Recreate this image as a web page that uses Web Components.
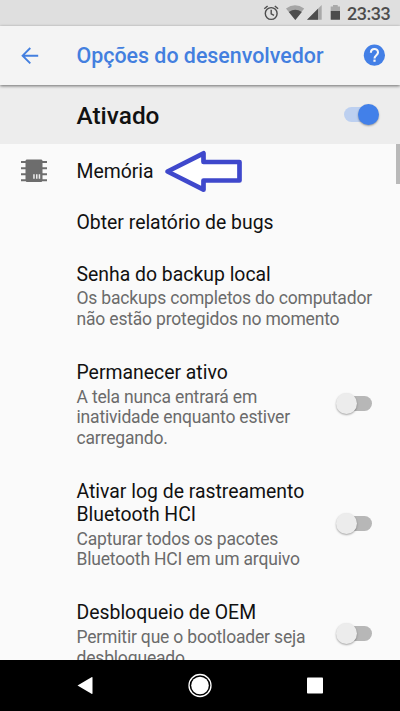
<!DOCTYPE html>
<html lang="pt-BR">
<head>
<meta charset="utf-8">
<title>Opções do desenvolvedor</title>
<style>
html, body { margin: 0; height: 100%; overflow: hidden; }
body { font-family: Roboto, "Liberation Sans", sans-serif; background: #fafafa; color: #111; }
</style>
</head>
<body>
<settings-screen></settings-screen>
<script>
function define(name, html) {
  const template = document.createElement('template');
  template.innerHTML = html;
  customElements.define(name, class extends HTMLElement {
    constructor() {
      super();
      this.attachShadow({ mode: 'open' }).append(template.content.cloneNode(true));
    }
  });
}

define('status-bar', `
<style>
:host { display: flex; height: 26px; background: #dfdfdf; color: #4d4d4d; flex: none; justify-content: flex-end; align-items: center; padding-right: 10px; box-sizing: border-box; }
span { font-size: 18px; font-weight: 500; line-height: 26px; letter-spacing: -.5px; width: 43px; white-space: nowrap; padding-top: 1px; }
svg { display: block; flex: none; }
</style>
<svg width="84" height="26" viewBox="263 0 84 26">
  <g fill="none" stroke="#4d4d4d" stroke-width="1.4">
    <circle cx="271.2" cy="13.5" r="5.9"/>
    <path d="M271.2 9.8V13.8L274 15.4"/>
    <path d="M264.3 8.7L267.6 6M278.1 8.7L274.8 6"/>
  </g>
  <path d="M286 8.6Q295 1.8 304.2 8.6L295.3 20Z" fill="#a5a5a5"/>
  <path d="M288.8 12Q295.3 7.3 301.8 12L295.3 20Z" fill="#4d4d4d"/>
  <path d="M321.7 5V19.7H307Z" fill="#a9a9a9"/>
  <path d="M318 8.7V19.7H307Z" fill="#4d4d4d"/>
  <path d="M330.7 6.5H333V5H337.7V6.5H340V11H330.7Z" fill="#a9a9a9"/>
  <path d="M330.7 11H340V19.2Q340 19.8 339.4 19.8H331.3Q330.7 19.8 330.7 19.2Z" fill="#4d4d4d"/>
</svg><span>23:33</span>`);

define('app-bar', `
<style>
:host { display: flex; height: 59px; flex: none; align-items: center; background: #f4f4f4; color: #437fdf; box-shadow: 0 1px 3px rgba(0,0,0,.55); z-index: 1; padding: 0 14px 0 20px; box-sizing: border-box; }
h1 { margin: 1px 0 0 36.5px; flex: 1; font-size: 21.4px; font-weight: 500; line-height: 28px; white-space: nowrap; }
svg { display: block; flex: none; }
</style>
<svg width="20" height="20" viewBox="0 0 20 20" fill="none" stroke="#437fdf" stroke-width="1.9"><path d="M18.2 9.7H2.8M10.3 2L2.6 9.7L10.3 17.4"/></svg>
<h1><slot></slot></h1>
<svg width="23" height="23" viewBox="0 0 23 23"><circle cx="11.4" cy="11.2" r="10.6" fill="#437fe6"/><path d="M7.9 8.8C7.9 3.7 15 3.7 15 8.6C15 11.1 11.5 11.4 11.5 14.4" fill="none" stroke="#f7f7f7" stroke-width="2.1"/><rect x="10.4" y="15.6" width="2.2" height="2.2" fill="#f7f7f7"/></svg>`);

define('toggle-switch', `
<style>
:host { display: grid; width: 36px; height: 22px; flex: none; align-items: center; grid-template-columns: 1fr; }
i, b { grid-area: 1 / 1; }
i { height: 15px; width: 28px; margin-left: 8px; border-radius: 8px; background: #b7b7b7; }
b { width: 21px; height: 21px; border-radius: 50%; background: #ececec; box-shadow: 0 1px 2px rgba(0,0,0,.35); }
:host([on]) i { background: #bdd0f0; margin-left: 0; width: 28px; }
:host([on]) b { background: #4280e9; margin-left: 14px; }
</style><i></i><b></b>`);

define('master-switch', `
<style>
:host { display: flex; height: 59px; flex: none; align-items: center; background: #ededed; padding: 3px 20.5px 0 76.5px; box-sizing: border-box; }
h2 { flex: 1; margin: 0; font-size: 24.4px; font-weight: 500; line-height: 30px; }
toggle-switch { margin-bottom: 3px; }
</style><h2><slot></slot></h2><toggle-switch on></toggle-switch>`);

define('setting-row', `
<style>
:host { display: grid; grid-template-columns: 76.5px 1fr auto; align-items: center; padding: 15.2px 0 13.3px; flex: none; }
:host([detail]) { padding-bottom: 18px; }
.icon { padding-left: 21px; height: 25px; margin-top: -2px; }
.title { font-size: 19.4px; line-height: 22.8px; white-space: pre; }
.summary { font-size: 17.5px; letter-spacing: -.18px; line-height: 20.3px; color: #6b6b6b; white-space: pre; }
:host([detail]) .summary { padding-top: 2px; }
.action { padding: 0 28px 4px 0; }
</style>
<div class="icon"><slot name="icon"></slot></div>
<div><div class="title"><slot></slot></div><div class="summary"><slot name="summary"></slot></div></div>
<div class="action"><slot name="action"></slot></div>`);

define('memory-icon', `
<style>:host, svg { display: block; }</style>
<svg width="26" height="24" viewBox="0 0 26 24"><path fill="#6d6d6d" d="M5.5 .5H20.5L21.5 1.5V22L20.5 23H5.5L4.5 22V1.5ZM0 2H26V4H0ZM0 8.2H26V10.2H0ZM0 14.3H26V16.3H0ZM0 20.2H26V22.2H0Z"/><path d="M12.2 15.2H13.7V19.8H12.2ZM15 15.2H16.5V19.8H15ZM17.7 15.2H19.2V19.8H17.7Z" fill="#ededed"/></svg>`);

define('pointer-arrow', `
<style>:host { position: absolute; left: 164px; top: 6px; } svg { display: block; }</style>
<svg width="79" height="43" viewBox="164 150 79 43"><path d="M167.5 171.5L203.5 153.3V162H239.5V180.5H203.5V189.7Z" fill="#fff" stroke="#3f48cc" stroke-width="4.7" stroke-linejoin="round"/></svg>`);

define('nav-bar', `
<style>
:host { display: flex; height: 51px; flex: none; background: #000; }
svg { display: block; }
</style>
<svg width="400" height="51" viewBox="0 660 400 51" fill="#fff"><path d="M77.5 685.5L91.5 677.2Q92.5 676.7 92.5 677.7V693.3Q92.5 694.3 91.5 693.8Z"/><circle cx="200" cy="685.5" r="8.8"/><circle cx="200" cy="685.5" r="11" fill="none" stroke="#fff" stroke-width="1.3"/><rect x="307" y="677.5" width="16" height="16" rx=".8"/></svg>`);

define('settings-screen', `
<style>
:host { display: flex; flex-direction: column; height: 711px; width: 400px; }
main { flex: 1; min-height: 0; overflow: hidden; position: relative; display: flex; flex-direction: column; padding-top: 1.5px; }
.thumb { position: absolute; right: 0; top: 0; width: 4px; height: 40px; background: #b9b9b9; }
</style>
<status-bar></status-bar>
<app-bar>Opções do desenvolvedor</app-bar>
<master-switch>Ativado</master-switch>
<main>
  <setting-row><memory-icon slot="icon"></memory-icon>Memória</setting-row>
  <setting-row>Obter relatório de bugs</setting-row>
  <setting-row detail>Senha do backup local<span slot="summary">Os backups completos do computador
não estão protegidos no momento</span></setting-row>
  <setting-row detail>Permanecer ativo<span slot="summary">A tela nunca entrará em
inatividade enquanto estiver
carregando.</span><toggle-switch slot="action"></toggle-switch></setting-row>
  <setting-row detail>Ativar log de rastreamento
Bluetooth HCI<span slot="summary">Capturar todos os pacotes
Bluetooth HCI em um arquivo</span><toggle-switch slot="action"></toggle-switch></setting-row>
  <setting-row detail>Desbloqueio de OEM<span slot="summary">Permitir que o bootloader seja
desbloqueado</span><toggle-switch slot="action"></toggle-switch></setting-row>
  <pointer-arrow></pointer-arrow>
  <div class="thumb"></div>
</main>
<nav-bar></nav-bar>`);
</script>
</body>
</html>
